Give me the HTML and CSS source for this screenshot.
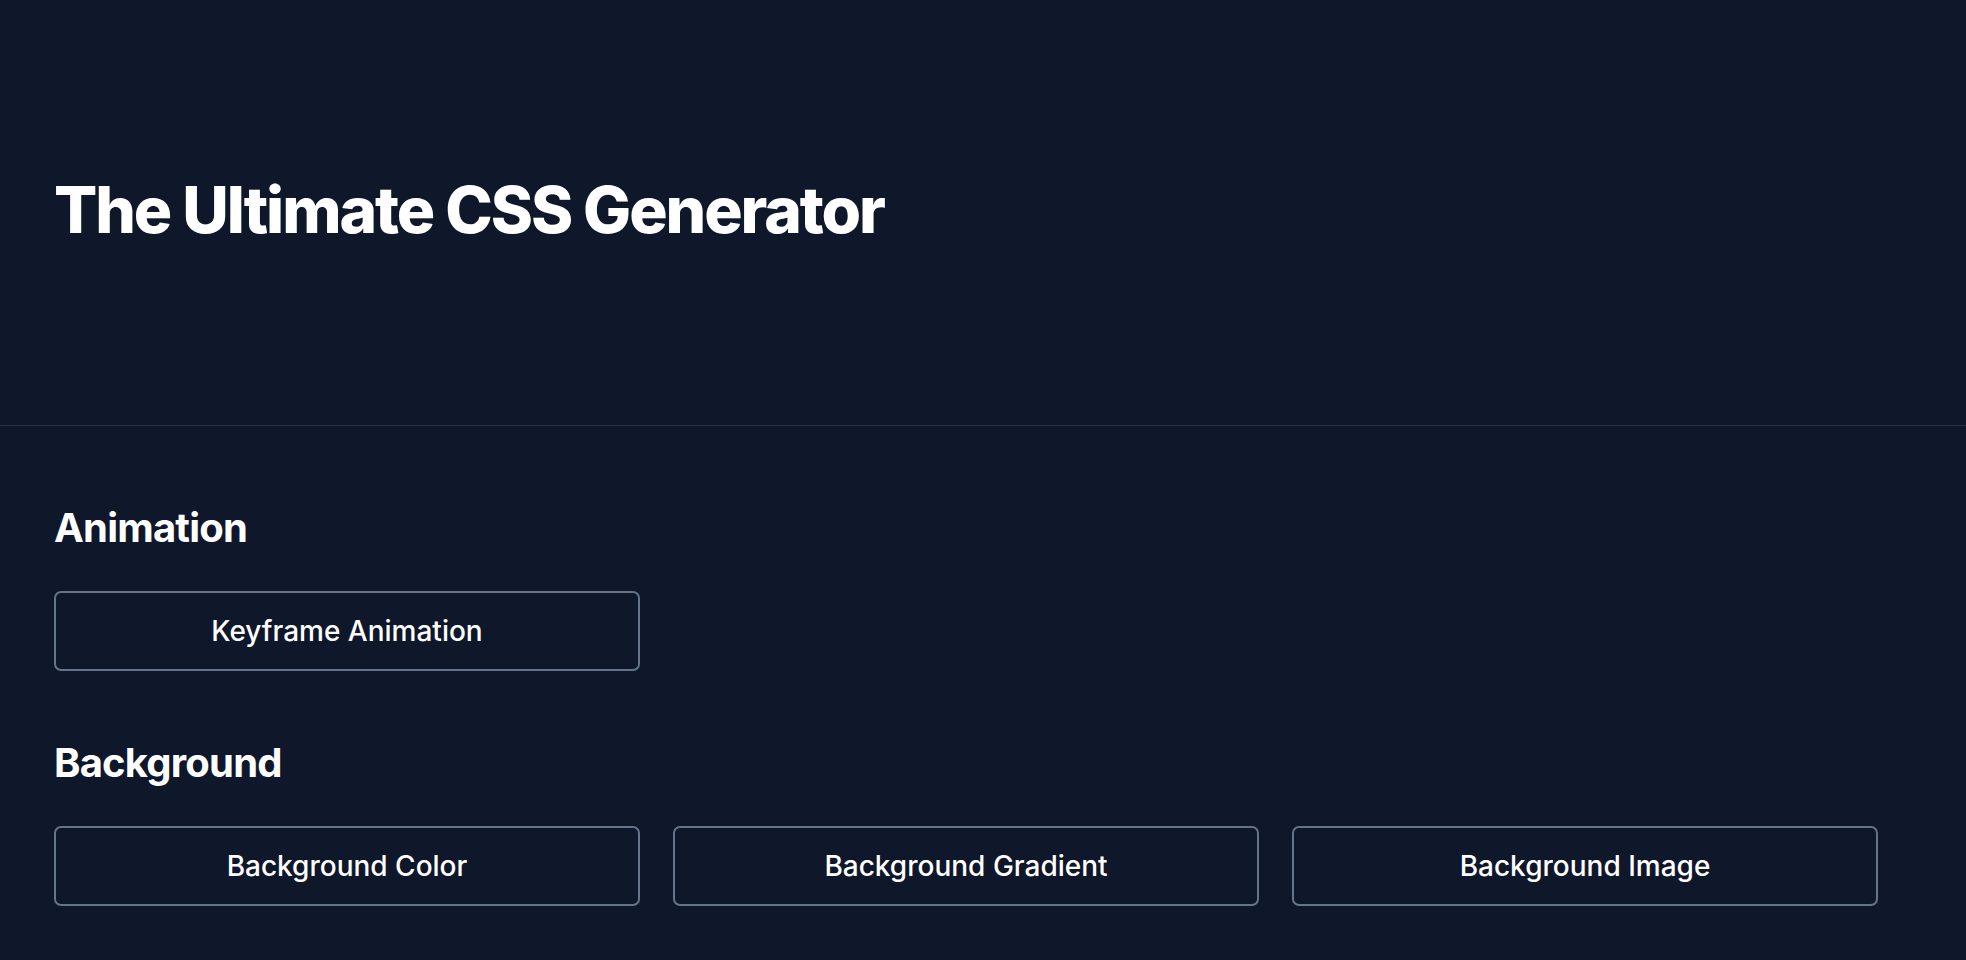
FILE: index.html
```html
<!DOCTYPE html>
<html lang="en">
<head>
<meta charset="utf-8">
<title>The Ultimate CSS Generator</title>
<link rel="stylesheet" href="styles.css">
</head>
<body>
<header class="hero">
  <h1 class="hero-title">The Ultimate CSS Generator</h1>
</header>
<main class="content">
  <section class="group">
    <h2 class="group-title">Animation</h2>
    <div class="grid">
      <a class="tile" href="#">Keyframe Animation</a>
    </div>
  </section>
  <section class="group">
    <h2 class="group-title">Background</h2>
    <div class="grid">
      <a class="tile" href="#">Background Color</a>
      <a class="tile" href="#">Background Gradient</a>
      <a class="tile" href="#">Background Image</a>
    </div>
  </section>
</main>
</body>
</html>
```
FILE: styles.css
```css
* { box-sizing: border-box; }
html, body { margin: 0; padding: 0; }
body {
  background: #0f172a;
  color: #ffffff;
  font-family: Inter, "Noto Sans", "Liberation Sans", sans-serif;
  min-height: 960px;
  overflow: hidden;
}
.hero {
  height: 426px;
  display: flex;
  align-items: center;
  padding: 0 54px;
  border-bottom: 1px solid #283142;
}
.hero-title {
  margin: 0;
  font-size: 64px;
  font-weight: 800;
  letter-spacing: -0.032em;
  line-height: 1;
  padding-bottom: 6px;
}
.content {
  padding: 78px 54px 0;
}
.group + .group { margin-top: 68px; }
.group-title {
  margin: 0 0 39px;
  font-size: 40px;
  font-weight: 700;
  line-height: 48px;
  letter-spacing: -0.02em;
}
.grid {
  display: grid;
  grid-template-columns: repeat(3, 586px);
  gap: 33px;
}
.tile {
  height: 80px;
  display: flex;
  align-items: center;
  justify-content: center;
  border: 2px solid #64748b;
  border-radius: 7px;
  color: #ffffff;
  text-decoration: none;
  font-size: 28px;
  font-weight: 550;
}
```
